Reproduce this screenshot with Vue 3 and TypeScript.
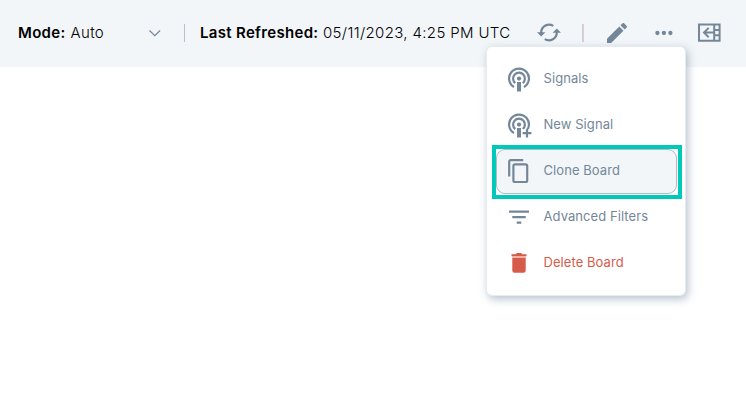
<script setup lang="ts">
import { ref } from 'vue'

interface MenuItem {
  id: string
  label: string
  danger?: boolean
}

const mode = ref('Auto')
const lastRefreshed = ref('05/11/2023, 4:25 PM UTC')
const active = ref('clone')
const items: MenuItem[] = [
  { id: 'signals', label: 'Signals' },
  { id: 'new', label: 'New Signal' },
  { id: 'clone', label: 'Clone Board' },
  { id: 'filters', label: 'Advanced Filters' },
  { id: 'delete', label: 'Delete Board', danger: true },
]
</script>

<template>
  <div class="page">
    <header class="toolbar">
      <button class="mode">
        <span class="label mode-label">Mode:</span>
        <span class="value mode-value">{{ mode }}</span>
        <svg class="chevron" width="14" height="8" viewBox="0 0 14 8"><path d="M1.500 1.500l5.300 5.200L12.100 1.500" /></svg>
      </button>
      <span class="divider"></span>
      <span class="label refreshed-label">Last Refreshed:</span>
      <span class="value refreshed-value">{{ lastRefreshed }}</span>
      <button class="tool refresh" aria-label="Refresh">
        <svg width="24" height="19" viewBox="0 0 24 19">
          <path class="line" d="M4.200 10A7.900 7.900 0 0 1 16.300 2.900M19.800 9A7.900 7.900 0 0 1 7.700 16.100" />
          <path class="solid" d="M0 9.300h8.400L4.200 13.500zM15.600 9.700H24l-4.200-4.200z" />
        </svg>
      </button>
      <span class="divider warm"></span>
      <button class="tool edit" aria-label="Edit">
        <svg width="20" height="20" viewBox="3 3 18 18">
          <path class="solid" d="M3 17.250V21h3.750L17.810 9.940l-3.750-3.750L3 17.250zM20.710 7.040a1 1 0 0 0 0-1.410l-2.340-2.340a1 1 0 0 0-1.410 0l-1.830 1.830 3.750 3.750 1.830-1.830z" />
        </svg>
      </button>
      <button class="tool more" aria-label="More">
        <svg width="18" height="6" viewBox="0 0 18 6">
          <circle class="solid" cx="2.400" cy="3" r="2.150" />
          <circle class="solid" cx="8.900" cy="3" r="2.150" />
          <circle class="solid" cx="15.400" cy="3" r="2.150" />
        </svg>
      </button>
      <button class="tool panel" aria-label="Open panel">
        <svg width="23" height="19" viewBox="0 0 23 19">
          <path class="line panel-lines" d="M1 1.500h20.600v16.200H1zM16.200 1.500v16M16.200 6.900h5.500M16.200 12.300h5.500M15.500 9.600H6M10.700 4.900L6 9.600l4.700 4.700" />
        </svg>
      </button>
    </header>

    <nav class="menu">
      <button
        v-for="item in items"
        :key="item.id"
        class="item"
        :class="{ active: item.id === active, danger: item.danger }"
      >
        <svg class="icon" width="28" height="28" viewBox="0 0 28 28">
          <template v-if="item.id === 'signals' || item.id === 'new'">
            <path class="line" d="M9 22A9.900 9.900 0 1 1 19 22" />
            <path class="line" d="M10.200 18.100A5.900 5.900 0 1 1 17.800 18.100" />
            <circle class="solid" cx="14" cy="13.600" r="2.100" />
            <path class="solid" d="M12 17h4v9.500h-4z" />
            <template v-if="item.id === 'new'">
              <path class="knockout" d="M17.200 18.300h9v8.600h-9z" />
              <path class="line" d="M22 17.800v8.800M17.600 22.200h8.800" />
            </template>
          </template>
          <template v-else-if="item.id === 'clone'">
            <path class="line" d="M4.200 19.500V4.600q0-1.400 1.400-1.400h12.600" />
            <rect class="line" x="8.400" y="7.400" width="13.800" height="17.600" rx="1.600" />
          </template>
          <path
            v-else-if="item.id === 'filters'"
            class="line bars"
            d="M4 8.700h20M7.300 14.100h13.400M11.700 19.700h4.600"
          />
          <template v-else>
            <path class="solid" d="M7.300 8.900h13.400v12.700q0 2.200-2.200 2.200h-9q-2.200 0-2.200-2.200z" />
            <path class="solid" d="M6.500 5.200h4.200l1.200-1.100h4.200l1.200 1.100h4.200v2H6.500z" />
            <path class="lid" d="M7.200 7.200h13.600v1.700H7.200z" />
          </template>
        </svg>
        <span class="text">{{ item.label }}</span>
      </button>
    </nav>
  </div>
</template>

<style>
body {
  background: #fff;
}
</style>

<style scoped>
.page {
  position: relative;
  height: 402px;
  overflow: hidden;
  font-family: Inter, "Liberation Sans", sans-serif;
}
button {
  display: flex;
  align-items: center;
  flex: none;
  padding: 0;
  border: 0;
  background: none;
  font: inherit;
  color: inherit;
}
svg {
  display: block;
  flex: none;
}
.line {
  fill: none;
  stroke: #748799;
  stroke-width: 2.200;
}
.panel-lines {
  stroke-width: 2;
}
.solid {
  fill: #748799;
}
.toolbar {
  display: flex;
  align-items: center;
  box-sizing: border-box;
  height: 67px;
  padding: 0 0 2px 18px;
  background: #f2f6f9;
  color: #000;
  font-size: 15px;
  white-space: nowrap;
}
.label {
  flex: none;
  font-weight: 570;
  letter-spacing: 0.320px;
}
.value {
  flex: none;
  font-weight: 330;
  letter-spacing: 0.350px;
}
.mode {
  width: 144px;
}
.mode-label {
  width: 52.500px;
  text-align: left;
}
.mode-value {
  flex: 1;
  text-align: left;
}
.chevron {
  fill: none;
  stroke: #748799;
  stroke-width: 1.200;
}
.divider {
  flex: none;
  width: 1px;
  height: 18px;
  margin-left: 22px;
  background: #b6c2cf;
}
.refreshed-label {
  width: 123px;
  margin-left: 15px;
}
.refreshed-value {
  width: 188px;
}
.refresh {
  margin-left: 26px;
}
.divider.warm {
  width: 2px;
  margin-left: 21px;
  background: linear-gradient(90deg, #e8c6c3 50%, #c5d7e9 50%);
}
.edit {
  margin-left: 23px;
}
.more {
  margin-left: 27.500px;
}
.panel {
  margin-left: 25.500px;
}
.menu {
  position: absolute;
  left: 487px;
  top: 47px;
  display: flex;
  flex-direction: column;
  gap: 1px;
  box-sizing: border-box;
  width: 198px;
  height: 248px;
  padding: 10px 8px 9px 9px;
  border-radius: 5px;
  background: #fff;
  box-shadow: 0 0 0 1px #e5ebf1, 2px 3px 8px 1px rgba(92, 119, 147, 0.450);
}
.item {
  position: relative;
  box-sizing: border-box;
  height: 45px;
  padding: 0 0 2px 8px;
  border: 1px solid transparent;
  border-radius: 9px;
  color: #748799;
}
.item.active {
  border-color: #aebbc9;
  background: #f2f6f9;
}
.item.active::after {
  content: "";
  position: absolute;
  inset: -5px -6px -6px -5px;
  border: 4px solid #00c9b9;
}
.text {
  margin: 0 0 2px 10.500px;
  font-size: 13px;
  letter-spacing: 0.070px;
}
.knockout {
  fill: #fff;
}
.bars {
  stroke-width: 2.300;
}
.danger {
  color: #d65b4a;
}
.danger .solid {
  fill: #d65b4a;
}
.danger .lid {
  fill: #eba99f;
}
</style>
